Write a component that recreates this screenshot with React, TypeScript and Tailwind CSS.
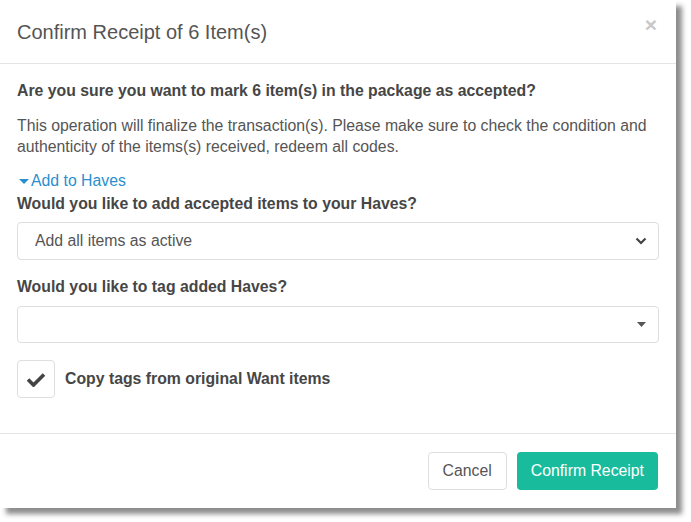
import React from "react";

export default function App() {
  return (
    <div className="w-[691px] h-[522px] bg-white" style={{ fontFamily: '"Liberation Sans", Arial, sans-serif' }}>
      <div className="w-[676px] h-[508px] bg-white shadow-[6px_6px_5px_rgba(0,0,0,0.45)] flex flex-col">
        {/* Header */}
        <div className="h-[64px] border-b border-[#e5e5e5] flex items-center justify-between pl-[17px] pr-[19px]">
          <h4 className="text-[20px] text-[#555] leading-none">Confirm Receipt of 6 Item(s)</h4>
          <span className="text-[21px] font-bold text-[#c8c8c8] leading-none -mt-[14px]">×</span>
        </div>
        {/* Body */}
        <div className="flex-1 px-[17px] pt-[16px] text-[#555]">
          <div className="text-[15.8px] font-bold leading-[22px] text-[#464646]">
            Are you sure you want to mark 6 item(s) in the package as accepted?
          </div>
          <p className="mt-[13px] text-[15.8px] leading-[21px]">
            This operation will finalize the transaction(s). Please make sure to check the condition and authenticity of the items(s) received, redeem all codes.
          </p>
          <div className="mt-[13px] text-[15.8px] leading-[21px] text-[#2a8fce] flex items-center">
            <svg width="10" height="6" viewBox="0 0 10 6" className="ml-[2px] mr-[2px] mt-[2px]">
              <path d="M0 0 L10 0 L5 5 Z" fill="#2a8fce" />
            </svg>
            <span>Add to Haves</span>
          </div>
          <div className="mt-[2px] text-[15.8px] font-bold leading-[21px] text-[#464646]">
            Would you like to add accepted items to your Haves?
          </div>
          <div className="mt-[8px] h-[38px] border border-[#dedede] rounded-[4px] flex items-center justify-between pl-[17px] pr-[11px]">
            <span className="text-[15.8px] text-[#555]">Add all items as active</span>
            <svg width="12" height="8" viewBox="0 0 12 8">
              <path d="M1.5 1.5 L6 6 L10.5 1.5" fill="none" stroke="#444" strokeWidth="2.2" />
            </svg>
          </div>
          <div className="mt-[16px] text-[15.8px] font-bold leading-[21px] text-[#464646]">
            Would you like to tag added Haves?
          </div>
          <div className="mt-[9px] h-[37px] border border-[#dedede] rounded-[4px] flex items-center justify-end pr-[12px]">
            <svg width="9" height="5" viewBox="0 0 9 5">
              <path d="M0 0 L9 0 L4.5 5 Z" fill="#555" />
            </svg>
          </div>
          <div className="mt-[17px] flex items-center">
            <div className="w-[38px] h-[38px] border border-[#dedede] rounded-[4px] flex items-center justify-center">
              <svg width="20" height="15" viewBox="0 0 20 15">
                <path d="M2 7.5 L7.5 13 L18 2.5" fill="none" stroke="#444" strokeWidth="3.6" />
              </svg>
            </div>
            <span className="ml-[10px] text-[15.8px] font-bold text-[#464646]">Copy tags from original Want items</span>
          </div>
        </div>
        {/* Footer */}
        <div className="h-[75px] border-t border-[#e5e5e5] flex items-center justify-end gap-[10px] pr-[18px]">
          <button className="h-[38px] px-[14px] border border-[#dedede] rounded-[4px] text-[15.8px] text-[#555] bg-white">
            Cancel
          </button>
          <button className="h-[38px] px-[14px] rounded-[4px] text-[15.8px] text-white bg-[#18bc9c]">
            Confirm Receipt
          </button>
        </div>
      </div>
    </div>
  );
}
